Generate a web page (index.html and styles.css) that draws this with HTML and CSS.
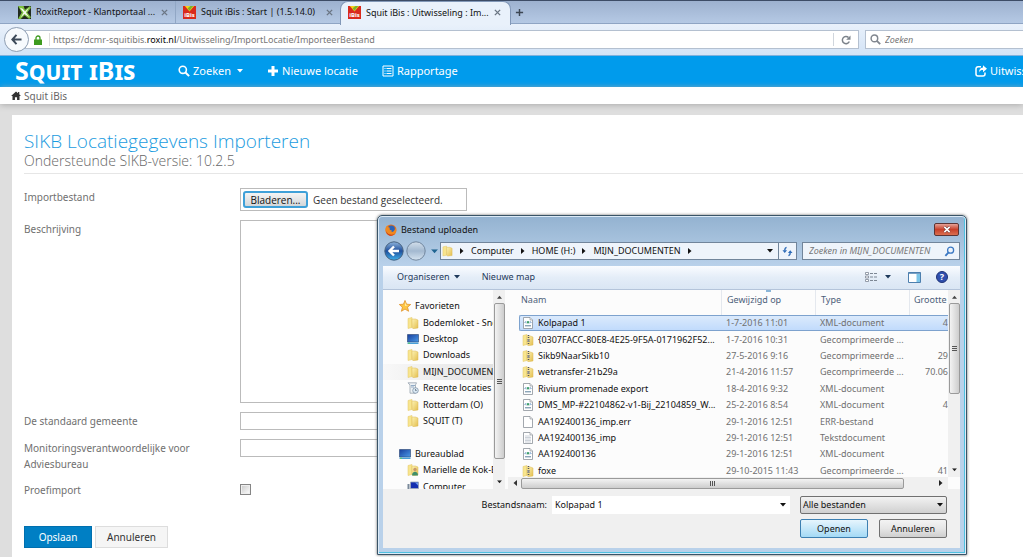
FILE: index.html
```html
<!DOCTYPE html>
<html lang="nl">
<head>
<meta charset="utf-8">
<title>Squit iBis : Uitwisseling : Importeren</title>
<link rel="stylesheet" href="styles.css">
</head>
<body>
<svg class="sprite" aria-hidden="true">
  <defs>
    <linearGradient id="g-folder" x1="0" x2="1" y1="0" y2="1"><stop offset="0" stop-color="#fdf3b4"/><stop offset="1" stop-color="#e3bd4c"/></linearGradient>
    <linearGradient id="g-orb" x1="0" x2="0" y1="0" y2="1"><stop offset="0" stop-color="#8fb4dc"/><stop offset=".5" stop-color="#1f4f9c"/><stop offset="1" stop-color="#3fb0ea"/></linearGradient>
    <linearGradient id="g-orb2" x1="0" x2="0" y1="0" y2="1"><stop offset="0" stop-color="#d3dfeb"/><stop offset=".5" stop-color="#a3b9d0"/><stop offset="1" stop-color="#d6e4f0"/></linearGradient>
    <linearGradient id="g-screen" x1="0" x2="1" y1="0" y2="1"><stop offset="0" stop-color="#173d9c"/><stop offset="1" stop-color="#4b9be8"/></linearGradient>
  </defs>
  <symbol id="folder" viewBox="0 0 12 12"><path d="M1 1.500 5 .5v10l-4 1z" fill="#f8e58e" stroke="#e2c565" stroke-width=".5"/><path d="M5 2h3.500l2.500 1v8l-5 .8L5 10z" fill="url(#g-folder)" stroke="#dcbb58" stroke-width=".5"/></symbol>
  <symbol id="zip" viewBox="0 0 12 12"><use href="#folder"/><path d="M6.500 1v10" stroke="#555" stroke-width="1.500" stroke-dasharray="1 1"/><path d="M5.500 5h2v3h-2z" fill="#8a8a8a"/></symbol>
  <symbol id="page" viewBox="0 0 12 12"><path d="M1.500.5h6.500l2.500 2.500v8.500h-9z" fill="#fff" stroke="#8b9299" stroke-width=".8"/><path d="M8 .5V3h2.500" fill="#e8e8e8" stroke="#8b9299" stroke-width=".6"/></symbol>
  <symbol id="text" viewBox="0 0 12 12"><use href="#page"/><path d="M3 4h5.500M3 5.500h6M3 7h6M3 8.500h6M3 10h6" stroke="#a9b4bf" stroke-width=".6"/></symbol>
  <symbol id="xml" viewBox="0 0 12 12"><use href="#page"/><path d="M4 4.300 3 5.300l1 1M8 4.300l1 1-1 1" fill="none" stroke="#3a76b5" stroke-width=".9"/><circle cx="6" cy="5.300" r="1.200" fill="#3d9d6c"/><path d="M3 8.800h6" stroke="#5b7f9c" stroke-width="1"/></symbol>
  <symbol id="screen" viewBox="0 0 12 12"><path d="M.5 1.500h11v7.500H.5z" fill="url(#g-screen)" stroke="#27416e" stroke-width=".6"/><path d="M.5 9.500h11v1.500H.5z" fill="#4aa0d8"/><path d="M1 10.200h2" stroke="#5bd15b"/></symbol>
  <symbol id="computer" viewBox="0 0 12 12"><path d="M3.500 1h8v6.500h-8z" fill="#142fb0" stroke="#9aa7b8" stroke-width=".8"/><path d="M8 1.500h3v3z" fill="#6d9bea"/><path d="M.5 3h2v6h-2z" fill="#7b8a9b"/><path d="M3 9h8l1 2H2z" fill="#c4ccd5"/></symbol>
  <symbol id="recent" viewBox="0 0 12 12"><path d="M1 .8h8.500l-1 2v8.400H3V3z" fill="#eef2f5" stroke="#8b98a5" stroke-width=".7"/><path d="M4 3.500h4M4 5h3" stroke="#6b8eb2" stroke-width=".7"/><circle cx="8.500" cy="8.500" r="2.800" fill="#dbe9f4" stroke="#72879b" stroke-width=".7"/><path d="M8.500 7v1.500h1.200" fill="none" stroke="#345" stroke-width=".6"/></symbol>
  <symbol id="user" viewBox="0 0 12 12"><use href="#folder"/><circle cx="8" cy="5.500" r="1.700" fill="#c99a6b"/><path d="M5 11.500c0-5 6-5 6 0z" fill="#3f8f6a"/></symbol>
  <symbol id="star" viewBox="0 0 12 12"><path d="m6 .4 1.600 3.800 4.100.3-3.100 2.700 1 4.100L6 9.100l-3.600 2.200 1-4.100L.3 4.500l4.100-.3z" fill="#fdc544" stroke="#dc8a1c" stroke-width=".7"/><path d="m6 2 1 2.800 2 .4-3 .8z" fill="#fff0a8"/></symbol>
  <symbol id="ibis" viewBox="0 0 14 14"><path d="M0 0h14v14H0z" fill="#d92a1c"/><path d="M2 0h10L7 6z" fill="#f7d21a"/><path d="M5 2.500 7 5l4-5H8z" fill="#7bb32e"/></symbol>
  <symbol id="down" viewBox="0 0 6 4"><path d="M0 0h6L3 3.500z" fill="currentColor"/></symbol>
  <symbol id="right" viewBox="0 0 4 6"><path d="M0 0v6l3.500-3z" fill="currentColor"/></symbol>
  <symbol id="loupe" viewBox="0 0 12 12"><circle cx="4.800" cy="4.800" r="3.600" fill="none" stroke="currentColor" stroke-width="1.600"/><path d="m7.500 7.500 3.600 3.600" stroke="currentColor" stroke-width="2"/></symbol>
  <symbol id="cross" viewBox="0 0 8 8"><path d="m1 1 6 6M7 1 1 7" stroke="currentColor" stroke-width="1.600"/></symbol>
</svg>

<div class="browser">
  <div class="tabs" role="tablist">
    <div class="tab first">
      <svg class="fav" viewBox="0 0 14 14"><path d="M0 0h14v14H0z" fill="#222b20"/><path d="M0 0h6l1.500 4L13 0l1 2-4 5 4 5-2 2-5-4-4 4H0l4-7z" fill="#7fc241"/><path d="m2 2 3 1 2.500 3L12 2 8.500 7l3.500 5-5-3.500L3 12l3-5z" fill="#f5f9f0"/></svg>
      <span class="tab-text">RoxitReport - Klantportaal ...</span>
      <button class="tab-close" aria-label="Sluiten"><svg viewBox="0 0 8 8"><use href="#cross"/></svg></button>
    </div>
    <div class="tab second">
      <span class="fav badge"><svg viewBox="0 0 14 14"><use href="#ibis"/></svg><b>iBis</b></span>
      <span class="tab-text">Squit iBis : Start | (1.5.14.0)</span>
      <button class="tab-close" aria-label="Sluiten"><svg viewBox="0 0 8 8"><use href="#cross"/></svg></button>
    </div>
    <div class="tab active">
      <span class="fav badge"><svg viewBox="0 0 14 14"><use href="#ibis"/></svg><b>iBis</b></span>
      <span class="tab-text">Squit iBis : Uitwisseling : Im...</span>
      <button class="tab-close" aria-label="Sluiten"><svg viewBox="0 0 8 8"><use href="#cross"/></svg></button>
    </div>
    <button class="tab-new" aria-label="Nieuw tabblad"><svg viewBox="0 0 10 10"><path d="M5 1v8M1 5h8" stroke="#3c4653" stroke-width="1.600"/></svg></button>
  </div>
  <div class="toolbar">
    <button class="back" aria-label="Terug"><svg viewBox="0 0 12 12"><path d="M6 1 1.500 6 6 11M2 6h9.500" fill="none" stroke="#3d4a5a" stroke-width="2.200"/></svg></button>
    <div class="urlbar">
      <svg class="lock" viewBox="0 0 8 10"><path d="M2 5V3a2 2 0 0 1 4 0v2" fill="none" stroke="#3e9b1f" stroke-width="1.300"/><path d="M0 4.500h8V10H0z" fill="#3e9b1f"/></svg>
      <span class="url">https://dcmr-squitibis.<b>roxit.nl</b>/Uitwisseling/ImportLocatie/ImporteerBestand</span>
      <button class="reload" aria-label="Vernieuwen"><svg viewBox="0 0 10 10"><path d="M8.300 6.500A3.600 3.600 0 1 1 7.500 2.500" fill="none" stroke="#7b828a" stroke-width="1.500"/><path d="M9.500.5v4.300H5.200z" fill="#7b828a"/></svg></button>
    </div>
    <label class="searchbar"><svg viewBox="0 0 12 12"><use href="#loupe"/></svg><input type="search" placeholder="Zoeken" aria-label="Zoeken"></label>
  </div>
</div>

<header class="nav">
  <a class="logo" href="#">Squit iBis</a>
  <nav class="menu">
    <a href="#"><svg class="ic" viewBox="0 0 12 12"><use href="#loupe"/></svg>Zoeken<svg class="caret" viewBox="0 0 6 4"><use href="#down"/></svg></a>
    <a href="#"><svg class="ic" viewBox="0 0 12 12"><path d="M6 1v10M1 6h10" stroke="#fff" stroke-width="3"/></svg>Nieuwe locatie</a>
    <a href="#"><svg class="ic" viewBox="0 0 12 12"><path d="M1 1h10v10H1z" fill="none" stroke="#fff"/><path d="M2.500 3.500h1M2.500 6h1M2.500 8.500h1M4.500 3.500h5M4.500 6h5M4.500 8.500h5" stroke="#fff"/></svg>Rapportage</a>
  </nav>
  <a class="exchange" href="#"><svg class="ic" viewBox="0 0 12 12"><path d="M6 1.800H3a2 2 0 0 0-2 2V9a2 2 0 0 0 2 2h5a2 2 0 0 0 2-2V7.500" fill="none" stroke="#fff" stroke-width="1.500"/><path d="M8 .2 12 3.800 8 7.200V5C6 5 5 5.600 4.200 7.600 4 4.500 5.200 2.600 8 2.400z" fill="#fff"/></svg>Uitwisseling</a>
</header>
<div class="crumbs"><svg viewBox="0 0 12 11"><path d="M6 .5 0 6h1.700v5h3V7.500h2.600V11h3V6H12l-2-1.900V1.200H8.500v1.500z" fill="#333"/></svg><a href="#">Squit iBis</a></div>

<main class="panel">
  <h1>SIKB Locatiegegevens Importeren</h1>
  <p class="sub">Ondersteunde SIKB-versie: 10.2.5</p>
  <form class="form">
    <label for="browse">Importbestand</label>
    <div class="file"><button type="button" id="browse">Bladeren...</button><span>Geen bestand geselecteerd.</span></div>
    <label for="desc">Beschrijving</label>
    <textarea id="desc"></textarea>
    <label for="gem">De standaard gemeente</label>
    <input class="line" type="text" id="gem">
    <label for="mon">Monitoringsverantwoordelijke voor Adviesbureau</label>
    <input class="line" type="text" id="mon">
    <label for="proef">Proefimport</label>
    <input class="check" type="checkbox" id="proef">
    <div class="actions"><button type="submit" class="primary">Opslaan</button><button type="button">Annuleren</button></div>
  </form>
</main>

<section class="dialog" role="dialog" aria-label="Bestand uploaden">
  <div class="titlebar">
    <svg viewBox="0 0 12 12"><circle cx="6" cy="6" r="5.500" fill="#e8701a"/><circle cx="6.300" cy="5" r="3.600" fill="#2b63b8"/><path d="M.5 5C1 2 2 2 2.500 1.500c0 1.500 1 2 2.500 2.200C4 5 5 6.500 7 6.500 5 9 9.500 8.500 10.500 4c2 5-1.500 7.800-4.500 7.800S0 9 .5 5z" fill="#f0881f"/><path d="M1 7c2 4 6 5 9 2.500-2 3-8 3.500-9-2.500z" fill="#c8321a"/></svg>
    <span>Bestand uploaden</span>
    <button class="close" aria-label="Sluiten"><svg viewBox="0 0 8 8"><path d="m1 1 6 6M7 1 1 7" stroke="#5b2a2a" stroke-width="3"/><path d="m1 1 6 6M7 1 1 7" stroke="#fff" stroke-width="2"/></svg></button>
  </div>
  <div class="address">
    <button class="orb" aria-label="Terug"><svg viewBox="0 0 20 20"><circle cx="10" cy="10" r="9.200" fill="url(#g-orb)" stroke="#46617f"/><path d="M10 5.500 5.500 10l4.500 4.500M6 10h9" fill="none" stroke="#fff" stroke-width="2.400"/></svg></button>
    <button class="orb" aria-label="Vooruit"><svg viewBox="0 0 20 20"><circle cx="10" cy="10" r="9.200" fill="url(#g-orb2)" stroke="#71869e"/></svg></button>
    <button class="history" aria-label="Recente pagina's"><svg viewBox="0 0 6 4"><use href="#down"/></svg></button>
    <div class="path">
      <svg class="pf" viewBox="0 0 12 12"><use href="#folder"/></svg>
      <svg class="arr" viewBox="0 0 4 6"><use href="#right"/></svg><span>Computer</span>
      <svg class="arr" viewBox="0 0 4 6"><use href="#right"/></svg><span>HOME (H:)</span>
      <svg class="arr" viewBox="0 0 4 6"><use href="#right"/></svg><span>MIJN_DOCUMENTEN</span>
      <svg class="arr" viewBox="0 0 4 6"><use href="#right"/></svg>
      <svg class="dd" viewBox="0 0 6 4"><use href="#down"/></svg>
      <button class="refresh" aria-label="Vernieuwen"><svg viewBox="0 0 12 12"><path d="M5 1.500Q3 2 3 5M9 7q0 3-2 3.500" fill="none" stroke="#2f6cb8" stroke-width="1.500"/><path d="M.5 4.500h5L3 7.500zM6.500 7.500h5L9 4.500z" fill="#2f6cb8"/></svg></button>
    </div>
    <label class="find"><input type="search" placeholder="Zoeken in MIJN_DOCUMENTEN" aria-label="Zoeken in MIJN_DOCUMENTEN"><svg viewBox="0 0 12 12"><circle cx="7.200" cy="4.500" r="3.300" fill="none" stroke="#3b78c3" stroke-width="1.400"/><path d="M5 7 1.500 10.800" stroke="#3b78c3" stroke-width="2"/></svg></label>
  </div>
  <div class="body">
    <div class="commands">
      <button>Organiseren<svg class="cd" viewBox="0 0 6 4"><use href="#down"/></svg></button>
      <button>Nieuwe map</button>
      <button class="view" aria-label="Weergave"><svg class="list" viewBox="0 0 12 10"><path d="M.5.5h3v2h-3zM.5 4h3v2h-3zM.5 7.500h3v2h-3z" fill="#fff" stroke="#7d8794" stroke-width=".8"/><path d="M5 1.500h3M9 1.500h3M5 5h3M9 5h3M5 8.500h3M9 8.500h3" stroke="#7d8794"/></svg><svg class="cd" viewBox="0 0 6 4"><use href="#down"/></svg></button>
      <button class="preview" aria-label="Voorbeeldvenster"><svg class="pane" viewBox="0 0 13 11"><path d="M.5.5h12v10H.5z" fill="#fff" stroke="#4d7fae"/><path d="M.5 1h12" stroke="#4d7fae" stroke-width="1.500"/><path d="M8.500 2h3.500v8H8.500z" fill="#7cc5e8"/></svg></button>
      <button class="help" aria-label="Help">?</button>
    </div>
    <div class="content">
      <div class="side">
        <ul class="tree">
          <li><svg viewBox="0 0 12 12"><use href="#star"/></svg>Favorieten</li>
          <li class="sub-item"><svg viewBox="0 0 12 12"><use href="#folder"/></svg>Bodemloket - Snelkoppeling</li>
          <li class="sub-item"><svg viewBox="0 0 12 12"><use href="#screen"/></svg>Desktop</li>
          <li class="sub-item"><svg viewBox="0 0 12 12"><use href="#folder"/></svg>Downloads</li>
          <li class="sub-item current"><svg viewBox="0 0 12 12"><use href="#folder"/></svg>MIJN_DOCUMENTEN</li>
          <li class="sub-item"><svg viewBox="0 0 12 12"><use href="#recent"/></svg>Recente locaties</li>
          <li class="sub-item"><svg viewBox="0 0 12 12"><use href="#folder"/></svg>Rotterdam (O)</li>
          <li class="sub-item"><svg viewBox="0 0 12 12"><use href="#folder"/></svg>SQUIT (T)</li>
          <li aria-hidden="true"></li>
          <li><svg viewBox="0 0 12 12"><use href="#screen"/></svg>Bureaublad</li>
          <li class="sub-item"><svg viewBox="0 0 12 12"><use href="#user"/></svg>Marielle de Kok-B</li>
          <li class="sub-item"><svg viewBox="0 0 12 12"><use href="#computer"/></svg>Computer</li>
        </ul>
        <div class="vbar"><svg viewBox="0 0 6 4"><path d="M0 4h6L3 .5z" fill="#444"/></svg><div class="thumb side-thumb"><i></i></div><svg viewBox="0 0 6 4"><use href="#down"/></svg></div>
      </div>
      <div class="files">
        <div class="list-wrap">
          <div class="list-view">
            <table>
              <colgroup><col><col class="c-date"><col class="c-type"><col class="c-size"></colgroup>
              <thead><tr><th>Naam</th><th class="sorted">Gewijzigd op</th><th>Type</th><th>Grootte</th></tr></thead>
              <tbody>
                <tr class="selected"><td><svg viewBox="0 0 12 12"><use href="#xml"/></svg>Kolpapad 1</td><td>1-7-2016 11:01</td><td>XML-document</td><td>4</td></tr>
                <tr><td><svg viewBox="0 0 12 12"><use href="#zip"/></svg>{0307FACC-80E8-4E25-9F5A-0171962F52...</td><td>1-7-2016 10:31</td><td>Gecomprimeerde ...</td><td></td></tr>
                <tr><td><svg viewBox="0 0 12 12"><use href="#zip"/></svg>Sikb9NaarSikb10</td><td>27-5-2016 9:16</td><td>Gecomprimeerde ...</td><td>29</td></tr>
                <tr><td><svg viewBox="0 0 12 12"><use href="#zip"/></svg>wetransfer-21b29a</td><td>21-4-2016 11:57</td><td>Gecomprimeerde ...</td><td>70.06</td></tr>
                <tr><td><svg viewBox="0 0 12 12"><use href="#xml"/></svg>Rivium promenade export</td><td>18-4-2016 9:32</td><td>XML-document</td><td></td></tr>
                <tr><td><svg viewBox="0 0 12 12"><use href="#xml"/></svg>DMS_MP-#22104862-v1-Bij_22104859_W...</td><td>25-2-2016 8:54</td><td>XML-document</td><td>4</td></tr>
                <tr><td><svg viewBox="0 0 12 12"><use href="#page"/></svg>AA192400136_imp.err</td><td>29-1-2016 12:51</td><td>ERR-bestand</td><td></td></tr>
                <tr><td><svg viewBox="0 0 12 12"><use href="#text"/></svg>AA192400136_imp</td><td>29-1-2016 12:51</td><td>Tekstdocument</td><td></td></tr>
                <tr><td><svg viewBox="0 0 12 12"><use href="#xml"/></svg>AA192400136</td><td>29-1-2016 12:51</td><td>XML-document</td><td></td></tr>
                <tr><td><svg viewBox="0 0 12 12"><use href="#zip"/></svg>foxe</td><td>29-10-2015 11:43</td><td>Gecomprimeerde ...</td><td>41</td></tr>
              </tbody>
            </table>
          </div>
          <div class="vbar"><svg viewBox="0 0 6 4"><path d="M0 4h6L3 .5z" fill="#444"/></svg><div class="thumb file-thumb"><i></i></div><svg viewBox="0 0 6 4"><use href="#down"/></svg></div>
        </div>
        <div class="hbar"><svg viewBox="0 0 4 6"><path d="M4 0v6L.5 3z" fill="#333"/></svg><div class="thumb"><i></i></div><svg viewBox="0 0 4 6"><use href="#right"/></svg></div>
      </div>
    </div>
    <div class="footer">
      <label for="fname">Bestandsnaam:</label>
      <div class="combo"><input type="text" id="fname" value="Kolpapad 1"><svg class="cd" viewBox="0 0 6 4"><use href="#down"/></svg></div>
      <div class="filter"><select aria-label="Bestandstype"><option>Alle bestanden</option></select><svg class="cd" viewBox="0 0 6 4"><use href="#down"/></svg></div>
      <div class="buttons"><button class="default">Openen</button><button>Annuleren</button></div>
    </div>
  </div>
</section>
</body>
</html>
```
FILE: styles.css
```css
* { box-sizing: border-box; }
body { margin: 0; min-height: 100vh; overflow: hidden; display: flex; flex-direction: column; background: #dedede; font-family: "Noto Sans", "Open Sans", sans-serif; font-size: 10px; line-height: 16px; color: #222; }
button, input, select, textarea { font: inherit; color: inherit; margin: 0; padding: 0; border: 0; background: none; outline: 0; min-width: 0; }
svg { display: block; flex: none; }
a { color: inherit; text-decoration: none; }
.sprite { position: absolute; width: 0; height: 0; }

/* Browser chrome */
.tabs { display: flex; align-items: stretch; height: 24px; border-top: 1px solid #3d4c66; border-bottom: 1px solid #8fa5c4; background: linear-gradient(#9db1cf, #b5c9e4); font-size: 9px; }
.tab { display: flex; align-items: center; gap: 5px; padding: 0 7px; }
.tab.first { width: 176px; padding-left: 18px; border-right: 1px solid #91a7c5; }
.tab.second { width: 164px; }
.tab.active { width: 171px; height: 24px; padding-right: 13px; padding-bottom: 2px; background: #e9f1fb; border: 1px solid #8298b8; border-bottom: 0; border-radius: 8px 8px 0 0; }
.fav { width: 13px; height: 13px; flex: none; }
.badge { display: grid; grid-template: 13px / 13px; justify-items: center; align-items: end; }
.badge > * { grid-area: 1 / 1; }
.badge svg { width: 13px; height: 13px; }
.badge b { font-size: 6px; line-height: 8px; color: #fff; }
.tab-text { flex: 1; white-space: nowrap; color: #111; }
.tab-close { flex: none; width: 7px; height: 7px; color: #6b7684; }
.tab-new { width: 9px; margin-left: 4px; }
.toolbar { display: flex; align-items: center; height: 31px; padding-left: 4px; background: linear-gradient(#e9f1fb, #d3e3f6); }
.back { display: grid; place-items: center; width: 25px; height: 25px; border: 1px solid #8d9db2; border-radius: 50%; background: #f7fafd; z-index: 1; }
.back svg { width: 11px; height: 11px; }
.urlbar { flex: 1; display: flex; align-items: center; height: 19px; margin-left: -4px; border: 1px solid #b4c0d0; background: #fff; }
.lock { width: 8px; height: 10px; margin: 0 7px 0 8px; }
.url { flex: 1; padding-left: 3px; border-left: 1px solid #ddd; font-size: 9px; line-height: 13px; color: #777; white-space: nowrap; }
.url b { font-weight: 400; color: #000; }
.reload { display: grid; place-items: center; width: 25px; height: 13px; border-left: 1px solid #d0d6dd; }
.reload svg { width: 10px; height: 10px; }
.searchbar { display: flex; align-items: center; gap: 4px; width: 158px; height: 19px; margin-left: 6px; padding-left: 4px; border: 1px solid #b4c0d0; border-right: 0; background: #fff; color: #80868e; }
.searchbar svg { width: 11px; height: 11px; }
.searchbar input { flex: 1; font-size: 9px; }
::placeholder { color: #777; font-style: italic; opacity: 1; }

/* Application */
.nav { display: flex; align-items: center; height: 32px; padding: 0 0 2px 15px; border-top: 1px solid #7fb0dc; background: #009bec; color: #fff; font-size: 11px; white-space: nowrap; }
.logo { width: 163px; padding-bottom: 2px; font-size: 25px; font-weight: 700; font-variant: small-caps; line-height: 28px; }
.menu { flex: 1; display: flex; gap: 24px; }
.menu a, .exchange { display: flex; align-items: center; gap: 3px; }
.ic { width: 12px; height: 12px; }
.caret { width: 6px; height: 4px; margin-left: 3px; }
.exchange { width: 48px; }
.crumbs { display: flex; align-items: center; gap: 3px; height: 17px; padding-left: 11px; background: #fff; color: #666; box-shadow: 0 1px 6px #aaa; }
.crumbs svg { width: 10px; height: 9px; }
.panel { flex: 1; margin: 11px 0 0 12px; padding: 14px 0 8px 12px; background: #fff; }
h1 { margin: 0; font-family: "Open Sans", sans-serif; font-weight: 300; font-size: 19px; line-height: 25px; color: #1a9be0; }
.sub { margin: 0; padding-bottom: 5px; border-bottom: 1px solid #e6e6e6; font-family: "Open Sans", sans-serif; font-weight: 300; font-size: 14px; line-height: 14px; color: #666; }
.form { display: grid; grid-template-columns: 176px 1fr; column-gap: 40px; row-gap: 9px; margin-top: 14px; color: #707070; justify-items: start; align-items: start; }
.form label { padding-top: 1px; }
.file { display: flex; align-items: center; gap: 5px; width: 227px; height: 23px; padding-left: 2px; border: 1px solid #bbb; font-family: "Open Sans", sans-serif; color: #333; white-space: nowrap; }
.file button { width: 65px; height: 17px; border: 2px solid #3fa0d8; border-radius: 3px; background: linear-gradient(#f4f4f4, #d3d6d9); color: #111; line-height: 12px; }
textarea { width: 227px; height: 183px; border: 1px solid #bbb; resize: none; }
.line { width: 227px; height: 18px; border: 1px solid #bbb; }
.check { appearance: none; width: 11px; height: 11px; margin-top: 3px; border: 1px solid #858585; background: linear-gradient(135deg, #c8c8c8, #fff); box-shadow: inset 0 0 0 1px #eee; }
.actions { grid-column: 1 / -1; display: flex; gap: 3px; margin-top: 19px; }
.actions button { width: 73px; height: 22px; border: 1px solid #ddd; background: #f5f5f5; color: #333; }
.actions .primary { width: 68px; border-color: #006fae; background: #007fc4; color: #fff; }

/* File dialog */
.dialog { position: absolute; left: 377px; top: 215px; width: 590px; padding: 0 6px 6px 5px; border: 1px solid #3a5467; border-radius: 5px 5px 0 0; background: linear-gradient(#93b2d0, #b9d1ea 50px); box-shadow: inset 0 0 0 1px #dcebf8, inset -2px -2px 0 #4fc0e0, 0 0 3px #666; font-size: 9px; }
.titlebar { display: flex; align-items: center; gap: 4px; height: 25px; padding: 2px 1px 0 2px; color: #111; }
.titlebar svg { width: 12px; height: 12px; }
.titlebar span { flex: 1; }
.close { display: grid; place-items: center; width: 25px; height: 13px; border: 1px solid #5d3434; border-radius: 2px; background: linear-gradient(#e5a196, #c8402a 50%, #d96f50); }
.titlebar .close svg { width: 8px; height: 7px; }
.address { display: flex; align-items: center; height: 20px; padding-left: 1px; margin-bottom: 5px; color: #111; }
.orb { width: 20px; height: 20px; margin-right: 2px; }
.history { width: 12px; color: #1f6491; }
.history svg { width: 7px; height: 5px; margin: auto; }
.path { flex: 1; display: flex; align-items: center; height: 18px; padding-left: 1px; border: 1px solid #71859b; background: #eef4fb; white-space: nowrap; }
.pf { width: 11px; height: 12px; }
.arr { width: 4px; height: 6px; margin: 0 7px; }
.dd { width: 6px; height: 4px; margin: 0 5px 0 auto; }
.refresh { display: grid; place-items: center; width: 18px; height: 16px; border-left: 1px solid #71859b; }
.refresh svg { width: 11px; height: 11px; }
.find { display: flex; align-items: center; width: 158px; height: 18px; margin-left: 5px; padding: 0 4px 0 6px; border: 1px solid #71859b; background: #eef4fb; }
.find input { flex: 1; }
.find svg { width: 11px; height: 11px; }
.body { background: #f0f0f0; }
.commands { display: flex; align-items: center; height: 24px; padding: 0 12px 1px 14px; border-bottom: 1px solid #b4c4da; background: linear-gradient(#fafcff, #e4edf8 50%, #dae6f4); color: #1e395b; }
.commands button { display: flex; align-items: center; margin-right: 22px; }
.cd { width: 6px; height: 4px; color: #111; }
.commands .cd { margin-left: 4px; color: #1e395b; }
.commands .view { margin-left: auto; margin-right: 17px; }
.list { width: 12px; height: 10px; }
.commands .view .cd { margin-left: 8px; }
.pane { width: 13px; height: 11px; }
.commands .preview { margin-right: 15px; }
.commands .help { justify-content: center; width: 12px; height: 12px; margin: 0; border-radius: 50%; background: #2f4fae; border: 1px solid #1e3377; color: #fff; font-weight: 700; line-height: 10px; }
.content { display: flex; height: 199px; background: #fcfcfc; }
.side { display: flex; width: 122px; overflow: hidden; }
.tree { flex: 1; min-width: 0; display: grid; grid-auto-rows: 1fr; height: 197px; margin: 8px 0 0; padding: 0; list-style: none; color: #111; }
.tree li { display: flex; align-items: center; gap: 4px; padding-left: 16px; white-space: nowrap; overflow: hidden; }
.tree .sub-item { padding-left: 24px; }
.tree svg { width: 12px; height: 12px; }
.tree .current { background: linear-gradient(90deg, #f8f8f8, #e2e2e2); }
.vbar { display: flex; flex-direction: column; align-items: center; justify-content: space-between; flex: none; width: 12px; padding: 5px 0; background: #f0f0f0; }
.vbar svg { width: 5px; height: 4px; }
.thumb { display: grid; place-items: center; border: 1px solid #9a9a9a; border-radius: 2px; background: linear-gradient(90deg, #f3f3f3, #cdcdcd); }
.vbar .thumb { width: 11px; }
.thumb i { width: 5px; height: 5px; background: repeating-linear-gradient(#555 0 1px, transparent 1px 2px); }
.side-thumb { height: 156px; margin: 4px 0 auto; }
.file-thumb { height: 91px; margin: 4px 0 auto; }
.files { flex: 1; min-width: 0; margin-left: 3px; display: flex; flex-direction: column; }
.list-wrap { flex: 1; min-height: 0; display: flex; overflow: hidden; }
.list-view { flex: 1; min-width: 0; overflow: hidden; padding-left: 11px; }
table { width: 100%; table-layout: fixed; height: 189px; border-collapse: separate; border-spacing: 0; color: #707070; }
.c-date { width: 94px; }
.c-type { width: 94px; }
.c-size { width: 39px; }
th, td { padding: 0 0 0 5px; text-align: left; font-weight: 400; line-height: 14px; white-space: nowrap; overflow: hidden; }
th { height: 25px; padding-bottom: 5px; color: #4c607a; border-left: 1px solid #e4e8ee; }
th:first-child { padding-left: 2px; border-left: 0; }
th.sorted { background: linear-gradient(#8bb6d8, #8bb6d8) center 0 / 5px 2px no-repeat; }
th:last-child { padding-left: 4px; }
td:first-child { padding-left: 3px; color: #111; }
td:last-child { text-align: right; }
td svg { display: inline-block; width: 12px; height: 12px; margin-right: 4px; vertical-align: -3px; }
.selected td { background: linear-gradient(#dbeafc, #c1dbfc); border-top: 1px solid #7da2ce; border-bottom: 1px solid #7da2ce; line-height: 12px; }
.selected td:first-child { padding-left: 2px; border-left: 1px solid #7da2ce; border-radius: 2px 0 0 2px; }
.hbar { display: flex; align-items: center; height: 12px; margin-right: 12px; padding: 0 5px; background: #f0f0f0; }
.hbar svg { width: 4px; height: 6px; }
.hbar .thumb { width: 383px; height: 11px; margin: 0 auto 0 4px; background: linear-gradient(#f3f3f3, #cdcdcd); }
.hbar .thumb i { background: repeating-linear-gradient(90deg, #555 0 1px, transparent 1px 2px); }
.footer { display: grid; grid-template-columns: 164px 1fr 147px; column-gap: 5px; row-gap: 5px; align-items: center; padding: 7px 13px 10px 0; color: #111; }
.footer label { text-align: right; }
.combo, .filter { display: flex; align-items: center; height: 18px; }
.combo { margin-right: 5px; padding: 0 4px 0 3px; background: #fff; }
.combo input { flex: 1; }
.filter { display: grid; align-items: center; }
.filter > * { grid-area: 1 / 1; }
.filter select { appearance: none; width: 100%; height: 18px; padding-left: 2px; border: 1px solid #707070; border-radius: 2px; background: linear-gradient(#f2f2f2, #d0d0d0); }
.filter .cd { justify-self: end; margin-right: 4px; pointer-events: none; }
.buttons { grid-column: 3; display: flex; gap: 11px; }
.buttons button { flex: 1; height: 19px; border: 1px solid #707070; border-radius: 2px; background: linear-gradient(#f3f3f3, #e6e6e6 50%, #cfcfcf); line-height: 16px; }
.buttons .default { border-color: #3c7fb1; background: linear-gradient(#e6f5fd, #c5e7f9 50%, #a4daf5); }
```
